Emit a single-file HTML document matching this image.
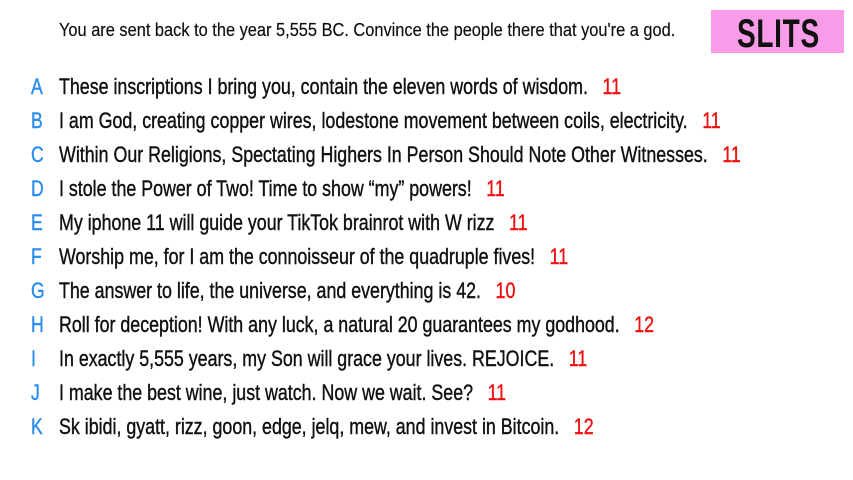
<!DOCTYPE html>
<html><head><meta charset="utf-8"><style>
body{margin:0;width:853px;height:480px;background:#fff;overflow:hidden;font-family:"Liberation Sans Narrow","Liberation Sans",sans-serif;position:relative}
.h{position:absolute;left:59px;top:20px;font-size:18px;white-space:nowrap;transform:scaleX(0.91);transform-origin:left;color:#111;-webkit-text-stroke:0.2px #111}
.box{position:absolute;left:711px;top:10px;width:133px;height:43px;background:#f89ce9}
.box span{position:absolute;left:26px;top:2px;font-size:40px;font-weight:bold;transform:scaleX(0.7);transform-origin:left;color:#111;letter-spacing:1px}
.r{position:absolute;left:0;height:34px;width:853px}
.l{position:absolute;left:31px;top:0;font-size:22px;color:#2a8ef0;transform:scaleX(0.8);transform-origin:left;-webkit-text-stroke:0.4px #2a8ef0}
.t{position:absolute;left:59px;top:0;font-size:22px;white-space:nowrap;transform:scaleX(0.81);transform-origin:left;color:#111;-webkit-text-stroke:0.4px #111}
.n{color:#f01010;margin-left:18px;-webkit-text-stroke:0.4px #f01010}
</style></head><body>
<div class="h">You are sent back to the year 5,555 BC. Convince the people there that you're a god.</div>
<div class="box"><span>SLITS</span></div>
<div class="r" style="top:74px"><span class="l">A</span><span class="t">These inscriptions I bring you, contain the eleven words of wisdom.<span class="n">11</span></span></div>
<div class="r" style="top:108px"><span class="l">B</span><span class="t">I am God, creating copper wires, lodestone movement between coils, electricity.<span class="n">11</span></span></div>
<div class="r" style="top:142px"><span class="l">C</span><span class="t">Within Our Religions, Spectating Highers In Person Should Note Other Witnesses.<span class="n">11</span></span></div>
<div class="r" style="top:176px"><span class="l">D</span><span class="t">I stole the Power of Two! Time to show “my” powers!<span class="n">11</span></span></div>
<div class="r" style="top:210px"><span class="l">E</span><span class="t">My iphone 11 will guide your TikTok brainrot with W rizz<span class="n">11</span></span></div>
<div class="r" style="top:244px"><span class="l">F</span><span class="t">Worship me, for I am the connoisseur of the quadruple fives!<span class="n">11</span></span></div>
<div class="r" style="top:278px"><span class="l">G</span><span class="t">The answer to life, the universe, and everything is 42.<span class="n">10</span></span></div>
<div class="r" style="top:312px"><span class="l">H</span><span class="t">Roll for deception! With any luck, a natural 20 guarantees my godhood.<span class="n">12</span></span></div>
<div class="r" style="top:346px"><span class="l">I</span><span class="t">In exactly 5,555 years, my Son will grace your lives. REJOICE.<span class="n">11</span></span></div>
<div class="r" style="top:380px"><span class="l">J</span><span class="t">I make the best wine, just watch. Now we wait. See?<span class="n">11</span></span></div>
<div class="r" style="top:414px"><span class="l">K</span><span class="t">Sk ibidi, gyatt, rizz, goon, edge, jelq, mew, and invest in Bitcoin.<span class="n">12</span></span></div>
</body></html>
